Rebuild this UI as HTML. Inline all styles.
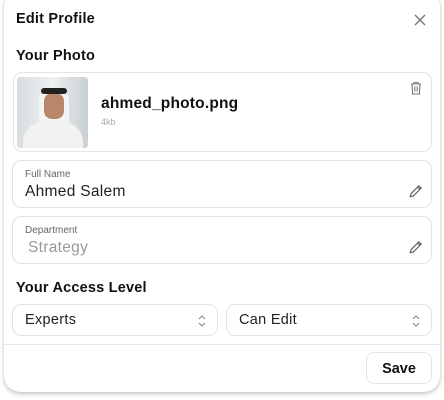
<!DOCTYPE html>
<html><head><style>
*{box-sizing:border-box;margin:0;padding:0}
body{width:444px;height:400px;background:#fff;font-family:"Liberation Sans",sans-serif;position:relative;overflow:hidden}
.card{position:absolute;left:4px;top:-10px;width:436px;height:402px;border-radius:16px;background:#fff;box-shadow:0 2px 5px rgba(0,0,0,.22),0 0 1px rgba(0,0,0,.2)}
.t{position:absolute;color:#111;font-weight:700;letter-spacing:0.2px}
.box{position:absolute;border:1px solid #e3e4e8;border-radius:9px;background:#fff}
.lbl{position:absolute;left:12px;top:8px;font-size:10px;color:#666}
.val{position:absolute;left:12px;top:22px;font-size:15.5px;color:#222;letter-spacing:0.3px}
svg{position:absolute}
</style></head><body>
<div class="card"></div>
<div class="t" style="left:16px;top:11px;font-size:14.5px">Edit Profile</div>
<svg style="left:413px;top:13px" width="14" height="14" viewBox="0 0 14 14"><path d="M2 2L12 12M12 2L2 12" stroke="#777" stroke-width="1.4"/></svg>
<div class="t" style="left:16px;top:48px;font-size:14.5px">Your Photo</div>
<div class="box" style="left:13px;top:72px;width:419px;height:80px">
 <div style="position:absolute;left:3px;top:4px;width:71px;height:71px;border-radius:3px;overflow:hidden;background:linear-gradient(90deg,#d8dde0,#eef0f1 50%,#c9cfd3)">
  <div style="position:absolute;left:22px;top:10px;width:30px;height:40px;border-radius:14px 14px 6px 6px;background:#f4f4f4"></div>
  <div style="position:absolute;left:27px;top:16px;width:20px;height:26px;border-radius:8px;background:#b8876a"></div>
  <div style="position:absolute;left:24px;top:11px;width:26px;height:6px;background:#222;border-radius:3px"></div>
  <div style="position:absolute;left:6px;top:45px;width:60px;height:40px;border-radius:20px 20px 0 0;background:#f2f2f2"></div>
 </div>
 <div style="position:absolute;left:87px;top:22px;font-size:15.5px;font-weight:700;color:#111;letter-spacing:0.2px">ahmed_photo.png</div>
 <div style="position:absolute;left:87px;top:44px;font-size:9px;color:#aaa">4kb</div>
 <svg style="left:396px;top:8px" width="12" height="14" viewBox="0 0 12 14"><path d="M1 3H11M4 3V1.5H8V3M2 3L2.6 13H9.4L10 3M4.8 5.5V10.5M7.2 5.5V10.5" stroke="#777" stroke-width="1.1" fill="none"/></svg>
</div>
<div class="box" style="left:12px;top:160px;width:420px;height:48px">
 <div class="lbl">Full Name</div><div class="val">Ahmed Salem</div>
 <svg style="left:395px;top:22px" width="16" height="16" viewBox="0 0 14 14"><path d="M2 12L2.5 9.5L9.5 2.5L11.5 4.5L4.5 11.5ZM8.5 3.5L10.5 5.5" stroke="#666" stroke-width="1.1" fill="none"/></svg>
</div>
<div class="box" style="left:12px;top:216px;width:420px;height:48px">
 <div class="lbl">Department</div><div class="val" style="color:#999;left:15px">Strategy</div>
 <svg style="left:395px;top:22px" width="16" height="16" viewBox="0 0 14 14"><path d="M2 12L2.5 9.5L9.5 2.5L11.5 4.5L4.5 11.5ZM8.5 3.5L10.5 5.5" stroke="#666" stroke-width="1.1" fill="none"/></svg>
</div>
<div class="t" style="left:16px;top:280px;font-size:14.5px">Your Access Level</div>
<div class="box" style="left:12px;top:304px;width:206px;height:32px"><div class="val" style="top:7px;font-size:14.5px">Experts</div>
 <svg style="left:184px;top:9px" width="10" height="14" viewBox="0 0 10 14"><path d="M2 5L5 2L8 5M2 9L5 12L8 9" stroke="#888" stroke-width="1.1" fill="none"/></svg></div>
<div class="box" style="left:226px;top:304px;width:206px;height:32px"><div class="val" style="top:7px;font-size:14.5px">Can Edit</div>
 <svg style="left:184px;top:9px" width="10" height="14" viewBox="0 0 10 14"><path d="M2 5L5 2L8 5M2 9L5 12L8 9" stroke="#888" stroke-width="1.1" fill="none"/></svg></div>
<div style="position:absolute;left:4px;top:344px;width:436px;height:1px;background:#e6e7ea"></div>
<div class="box" style="left:366px;top:352px;width:66px;height:32px;border-radius:8px"><div style="position:absolute;left:0;right:0;top:8px;text-align:center;font-size:14.5px;font-weight:700;color:#111">Save</div></div>
</body></html>
